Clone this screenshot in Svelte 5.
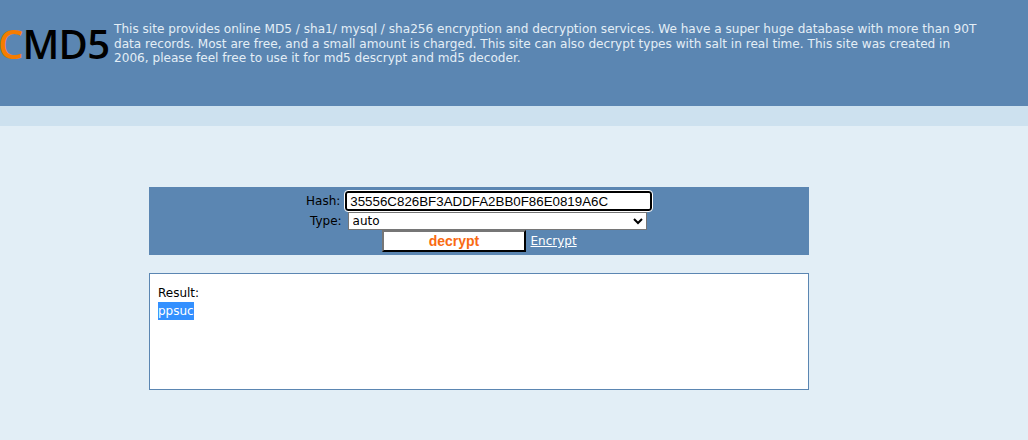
<script>
  let hash = $state('35556C826BF3ADDFA2BB0F86E0819A6C');
  let type = $state('auto');
</script>

<header class="top">
  <div class="logo"><span class="c">C</span>MD5</div>
  <p class="intro">This site provides online MD5 / sha1/ mysql / sha256 encryption and decryption services. We have a super huge database with more than 90T data records. Most are free, and a small amount is charged. This site can also decrypt types with salt in real time. This site was created in 2006, please feel free to use it for md5 descrypt and md5 decoder.</p>
</header>
<div class="band"></div>

<main class="main">
  <form class="form" onsubmit={(e) => e.preventDefault()}>
    <div class="row row-hash">
      <label for="hash">Hash:</label>
      <input id="hash" class="hash" bind:value={hash} />
    </div>
    <div class="row row-type">
      <label for="type">Type:</label>
      <select id="type" class="type" bind:value={type}>
        <option value="auto">auto</option>
      </select>
    </div>
    <div class="row row-btn">
      <button class="go" type="submit">decrypt</button>
      <a class="enc" href="#encrypt">Encrypt</a>
    </div>
  </form>
  <section class="result">
    <div>Result:</div>
    <div><span class="sel">ppsuc</span></div>
  </section>
</main>

<style>
  :global(body) {
    margin: 0;
    background: #e2eef6;
    font-family: "DejaVu Sans", Verdana, sans-serif;
    font-size: 12px;
  }
  .top {
    height: 106px;
    background: #5b86b2;
    display: flex;
    align-items: flex-start;
    overflow: hidden;
  }
  .logo {
    flex: none;
    width: 114px;
    margin-top: 16px;
    text-indent: -2px;
    font: 600 40px/56px "Open Sans", sans-serif;
    letter-spacing: -0.8px;
    color: #000;
    white-space: nowrap;
  }
  .c { color: #f57c00; }
  .intro {
    margin: 22px 0 0 0;
    width: 870px;
    color: #e4eef6;
    font-size: 12.1px;
    line-height: 14.6px;
  }
  .band { height: 20px; background: #cde1ef; }
  .main { width: 660px; margin: 61px 0 0 149px; }
  .form {
    height: 68px;
    background: #5b86b2;
    padding-top: 3px;
    box-sizing: border-box;
    color: #000;
  }
  .row { display: flex; align-items: center; }
  .row-hash { height: 22px; padding-left: 157px; gap: 5px; }
  .row-type { height: 18px; padding-left: 161px; gap: 6px; }
  .row-btn { height: 22px; padding-left: 233px; gap: 4.5px; }
  .hash {
    box-sizing: border-box;
    width: 307px;
    height: 20px;
    padding: 0 3px;
    border: 2px solid #000;
    border-radius: 3px;
    outline: 1px solid #fff;
    font: 13.33px "Liberation Sans", Arial, sans-serif;
    color: #000;
    background: #fff;
  }
  .type {
    box-sizing: border-box;
    width: 299px;
    height: 18px;
    padding: 0;
    border: 1px solid #767676;
    border-radius: 0;
    font: 12px "DejaVu Sans", sans-serif;
    background: #fff;
    color: #000;
  }
  .go {
    box-sizing: border-box;
    width: 144px;
    height: 22px;
    padding: 0;
    border: 2px solid;
    border-color: #767676 #000 #000 #767676;
    background: #fff;
    color: #f96a12;
    font: bold 14px "Liberation Sans", Arial, sans-serif;
  }
  .enc { color: #fff; font-size: 12px; text-decoration: underline; }
  .result {
    box-sizing: border-box;
    height: 117px;
    margin-top: 18px;
    padding: 10px 8px;
    background: #fff;
    border: 1px solid #5b86b2;
    line-height: 18px;
    color: #000;
  }
  .sel { background: #3390ff; color: #fff; display: inline-block; }
</style>
